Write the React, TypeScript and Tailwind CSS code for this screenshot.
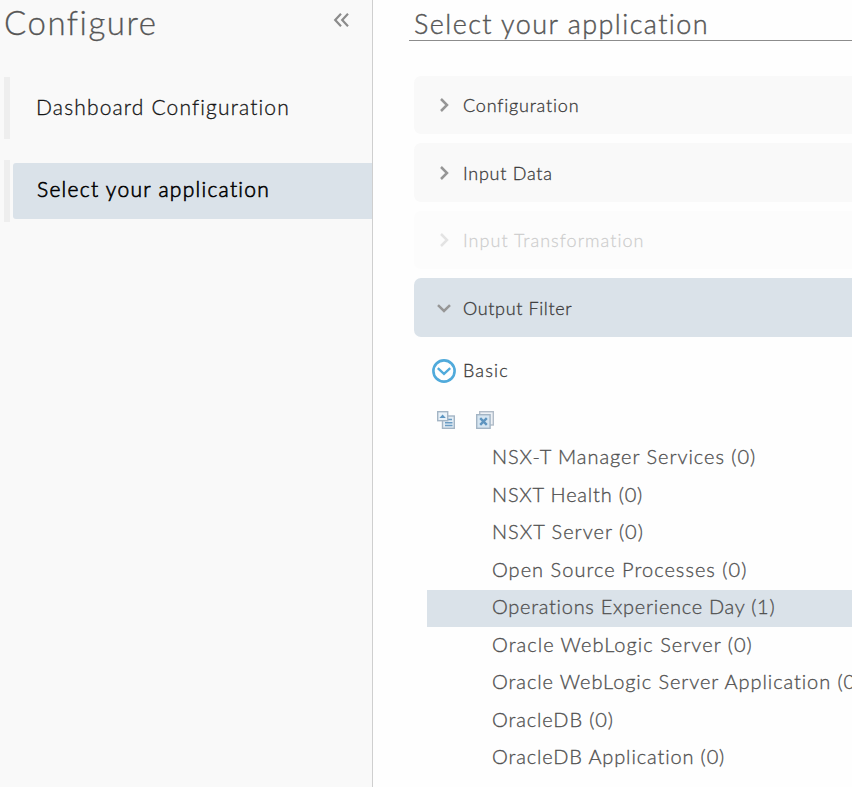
import React from "react";

type Panel = { label: string; open?: boolean; disabled?: boolean; tracking: string };

const panels: Panel[] = [
  { label: "Configuration", tracking: "tracking-[0.8px]" },
  { label: "Input Data", tracking: "tracking-[0.75px] pt-px" },
  { label: "Input Transformation", disabled: true, tracking: "tracking-[1.03px]" },
  { label: "Output Filter", open: true, tracking: "tracking-[0.64px] pt-px" },
];

const items: { label: string; tracking: string; selected?: boolean }[] = [
  { label: "NSX-T Manager Services (0)", tracking: "tracking-[0.96px]" },
  { label: "NSXT Health (0)", tracking: "tracking-[0.8px]" },
  { label: "NSXT Server (0)", tracking: "tracking-[1px]" },
  { label: "Open Source Processes (0)", tracking: "tracking-[1.02px]" },
  { label: "Operations Experience Day (1)", tracking: "tracking-[0.71px]", selected: true },
  { label: "Oracle WebLogic Server (0)", tracking: "tracking-[1.03px]" },
  { label: "Oracle WebLogic Server Application (0)", tracking: "tracking-[0.92px]" },
  { label: "OracleDB (0)", tracking: "tracking-[0.87px]" },
  { label: "OracleDB Application (0)", tracking: "tracking-[0.86px]" },
];

function Chevron({ open }: { open?: boolean }) {
  return (
    <svg width="16" height="16" viewBox="0 0 16 16" fill="none" stroke="#969696" strokeWidth="2.5" className="shrink-0">
      {open ? <path d="M2 5.2 8 11l6-5.8" /> : <path d="m5 2 6 6-6 6" />}
    </svg>
  );
}

function ExpandAllIcon() {
  return (
    <svg width="18" height="18" viewBox="0 0 18 18">
      <rect x="5.5" y="5" width="11.8" height="12.3" fill="#e3edf5" stroke="#a3b5c5" strokeWidth="1.4" />
      <path d="M11 8.5h4M8 11.7h7.5M8 14.6h7.5" stroke="#6a9cc3" strokeWidth="1.5" />
      <rect x=".7" y=".7" width="10" height="9" fill="#e9f2f9" stroke="#a3b5c5" strokeWidth="1.4" />
      <path d="m5.6 3.5 3.2 3.5H2.4z" fill="#5e96c2" />
    </svg>
  );
}

function CloseAllIcon() {
  return (
    <svg width="18" height="18" viewBox="0 0 18 18">
      <rect x="3.7" y=".7" width="13.6" height="13.3" fill="#edf1f5" stroke="#b1bcc8" strokeWidth="1.4" />
      <rect x=".7" y="3.7" width="13.4" height="13.6" fill="#d5e5f1" stroke="#a3b5c5" strokeWidth="1.4" />
      <path d="m4.2 7.2 6.6 6.6M10.8 7.2l-6.6 6.6" stroke="#5e94bf" strokeWidth="2.4" />
    </svg>
  );
}

export default function App() {
  return (
    <div className="flex h-[787px] w-[852px] overflow-hidden bg-[#fefefe] font-[Lato,sans-serif] font-light whitespace-nowrap [-webkit-text-stroke:0.3px]">
      <aside className="flex w-[373px] shrink-0 flex-col border-r border-[#cfcfcf] bg-[#f9f9f9]">
        <header className="flex h-[77px] items-start justify-between pr-[23px] pl-1">
          <h1 className="text-[33px] leading-[44px] tracking-[1.5px] text-[#565656]">Configure</h1>
          <svg width="16" height="16" viewBox="0 0 16 16" fill="none" stroke="#8c8c8c" strokeWidth="2.2" className="mt-3">
            <path d="M8 1.8 2.2 8 8 14.2M15 1.8 9.2 8l5.8 6.2" />
          </svg>
        </header>
        <nav className="flex flex-col gap-[21px] pl-1 text-[21px] text-black">
          <div className="flex h-[62px] items-center border-l-6 border-[#eeeeee] pb-0.5 pl-[26px]">
            <span className="tracking-[1.15px] text-[#151515]">Dashboard Configuration</span>
          </div>
          <div className="flex h-[62px] items-center border-l-6 border-[#eeeeee] pl-[3px]">
            <div className="flex h-14 flex-1 items-center rounded-l-[3px] bg-[#dae2e9] pb-1 pl-6">
              <span className="tracking-[1.27px] [-webkit-text-stroke:0.6px]">Select your application</span>
            </div>
          </div>
        </nav>
      </aside>
      <main className="flex min-w-0 flex-1 flex-col">
        <h2 className="ml-9 h-[41px] border-b border-[#8c8c8c] pl-[5px] text-[27px] leading-[47px] tracking-[1.43px] text-[#565656] [-webkit-text-stroke:0.4px]">
          <span>Select your application</span>
        </h2>
        <div className="mt-[34.8px] ml-[41px] flex flex-col gap-[9px]">
          {panels.map((p) => (
            <section
              key={p.label}
              className={`flex h-[58.5px] items-center gap-[11px] rounded-l-[7px] pl-[22px] text-[18px] text-[#3b3b3b] ${p.open ? "bg-[#dae2e9]" : "bg-[#f9f9f9]"} ${p.disabled ? "opacity-25" : ""}`}
            >
              <Chevron open={p.open} />
              <span className={p.tracking}>{p.label}</span>
            </section>
          ))}
        </div>
        <div className="mt-[22.2px] ml-[59px] flex h-6 items-center gap-[7px] text-[18px] text-[#3b3b3b]">
          <svg width="24" height="24" viewBox="0 0 24 24" fill="none" stroke="#50aadb">
            <circle cx="12" cy="12" r="10.6" strokeWidth="2.6" />
            <path d="m5.8 9.2 6.2 5.6 6.2-5.6" strokeWidth="2.4" />
          </svg>
          <span className="tracking-[1.15px]">Basic</span>
        </div>
        <div className="mt-7 ml-16 flex gap-[21px]">
          <ExpandAllIcon />
          <CloseAllIcon />
        </div>
        <ul className="mt-[11px] ml-[54px] text-[20px] text-[#505050]">
          {items.map((i) => (
            <li key={i.label} className={`flex h-[37.5px] items-center pb-[5px] pl-[65px] ${i.selected ? "bg-[#dae2e9]" : ""}`}>
              <span className={i.tracking}>{i.label}</span>
            </li>
          ))}
        </ul>
      </main>
    </div>
  );
}
